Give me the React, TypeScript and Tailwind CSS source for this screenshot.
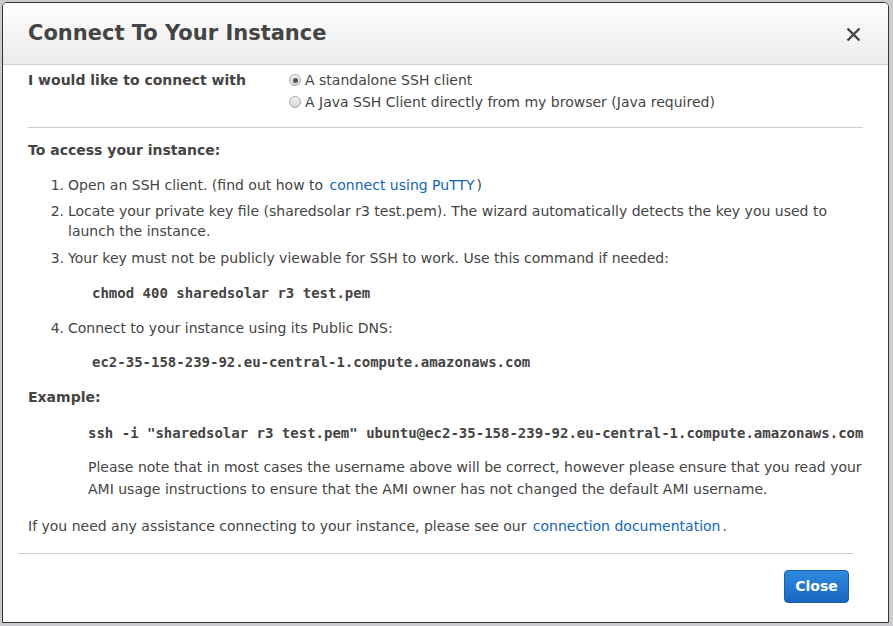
import React from "react";

const Radio = ({ checked }: { checked?: boolean }) => (
  <span className="inline-flex h-[12px] w-[12px] shrink-0 items-center justify-center rounded-full border border-[#a9a9a9] bg-gradient-to-b from-[#f4f4f4] to-[#d6d6d6]">
    {checked && <span className="h-[5px] w-[5px] rounded-full bg-[#555]" />}
  </span>
);

const App: React.FC = () => {
  return (
    <div className="h-[626px] w-[893px] overflow-hidden bg-[#c9cbce] pl-[2px] pt-[2px] font-['DejaVu_Sans',sans-serif] text-[14px] text-[#444]">
      <div className="flex h-[621px] w-[887px] flex-col overflow-hidden rounded-t-[5px] border border-[#333] bg-white">
        {/* header */}
        <div className="flex h-[62px] shrink-0 items-center justify-between border-b border-[#cfcfcf] bg-gradient-to-b from-white to-[#ebebeb] pl-[25px] pr-[27px]">
          <h1 className="text-[21px] font-bold text-[#444]">Connect To Your Instance</h1>
          <svg width="15" height="15" viewBox="0 0 15 15" className="mt-[2px]">
            <path d="M1.5 1.5 L13.5 13.5 M13.5 1.5 L1.5 13.5" stroke="#444" strokeWidth="2.4" />
          </svg>
        </div>

        {/* body */}
        <div className="flex flex-col px-[25px]">
          <div className="mt-[4px] flex leading-[22px]">
            <div className="w-[261px] font-bold">I would like to connect with</div>
            <div className="flex flex-col">
              <label className="flex items-center gap-[4px]">
                <Radio checked />
                <span>A standalone SSH client</span>
              </label>
              <label className="flex items-center gap-[4px]">
                <Radio />
                <span>A Java SSH Client directly from my browser (Java required)</span>
              </label>
            </div>
          </div>

          <div className="mt-[14px] h-px bg-[#cccccc]" />

          <div className="mt-[12px] font-bold leading-[20px]">To access your instance:</div>

          <ol className="leading-[20px]">
            <li className="mt-[15px] flex">
              <span className="w-[40px] shrink-0 pr-[4px] text-right">1.</span>
              <span>
                Open an SSH client. (find out how to{" "}
                <a className="px-[2px] text-[#1166bb]">connect using PuTTY</a>)
              </span>
            </li>
            <li className="mt-[6px] flex">
              <span className="w-[40px] shrink-0 pr-[4px] text-right">2.</span>
              <span>
                Locate your private key file (sharedsolar r3 test.pem). The wizard automatically detects the key you used to launch the instance.
              </span>
            </li>
            <li className="mt-[7px] flex">
              <span className="w-[40px] shrink-0 pr-[4px] text-right">3.</span>
              <span>Your key must not be publicly viewable for SSH to work. Use this command if needed:</span>
            </li>
            <div className="mt-[15px] pl-[64px] font-['DejaVu_Sans_Mono',monospace] font-bold">
              chmod 400 sharedsolar r3 test.pem
            </div>
            <li className="mt-[15px] flex">
              <span className="w-[40px] shrink-0 pr-[4px] text-right">4.</span>
              <span>Connect to your instance using its Public DNS:</span>
            </li>
            <div className="mt-[14px] pl-[64px] font-['DejaVu_Sans_Mono',monospace] font-bold">
              ec2-35-158-239-92.eu-central-1.compute.amazonaws.com
            </div>
          </ol>

          <div className="mt-[15px] font-bold leading-[20px]">Example:</div>
          <div className="mt-[16px] whitespace-nowrap pl-[60px] font-['DejaVu_Sans_Mono',monospace] font-bold leading-[20px]">
            ssh -i "sharedsolar r3 test.pem" ubuntu@ec2-35-158-239-92.eu-central-1.compute.amazonaws.com
          </div>
          <p className="mt-[13px] pl-[60px] leading-[22px]">
            Please note that in most cases the username above will be correct, however please ensure that you read your AMI usage instructions to ensure that the AMI owner has not changed the default AMI username.
          </p>
          <p className="mt-[16px] leading-[20px]">
            If you need any assistance connecting to your instance, please see our{" "}
            <a className="px-[2px] text-[#1166bb]">connection documentation</a>.
          </p>
        </div>

        {/* footer */}
        <div className="ml-[15px] mr-[35px] mt-[17px] h-px bg-[#cccccc]" />
        <div className="mt-[16px] flex justify-end pr-[39px]">
          <button className="h-[33px] w-[65px] rounded-[4px] border border-[#1a5ea8] bg-gradient-to-b from-[#2f8be0] to-[#1866bf] text-[14px] font-bold text-white">
            Close
          </button>
        </div>
      </div>
    </div>
  );
};

export default App;
